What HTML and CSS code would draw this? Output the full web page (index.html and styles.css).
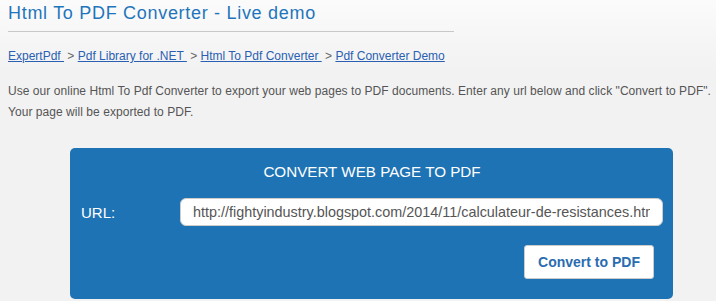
FILE: index.html
```html
<!DOCTYPE html>
<html lang="en">
<head>
  <meta charset="UTF-8">
  <title>Html To PDF Converter - Live demo</title>
  <link rel="stylesheet" href="styles.css">
</head>
<body>

<h1 class="page-title">Html To PDF Converter - Live demo</h1>

<!-- Breadcrumbs -->
<div class="crumbs">
  <a href="#">ExpertPdf </a>&nbsp;&gt; <a href="#">Pdf Library for .NET </a>&nbsp;&gt; <a href="#">Html To Pdf Converter </a>&nbsp;&gt; <a href="#">Pdf Converter Demo</a>
</div>

<p class="intro">Use our online Html To Pdf Converter to export your web pages to PDF documents. Enter any url below and click "Convert to PDF".<br>Your page will be exported to PDF.</p>

<!-- Converter box -->
<div class="converter">
  <div class="converter-title">CONVERT WEB PAGE TO PDF</div>
  <div class="url-row">
    <label for="url">URL:</label>
    <input type="text" id="url" value="http://fightyindustry.blogspot.com/2014/11/calculateur-de-resistances.html">
  </div>
  <div class="actions">
    <button type="button">Convert to PDF</button>
  </div>
</div>

</body>
</html>
```

FILE: styles.css
```css
body {
  margin: 0;
  padding: 0 8px;
  font-family: "Liberation Sans", Arial, sans-serif;
  background: linear-gradient(#fbfbfb, #f2f2f2 70px);
  background-color: #f2f2f2;
  min-height: 301px;
  box-sizing: border-box;
}
.page-title {
  width: 446px;
  margin: 0;
  padding: 2px 0 7px;
  font-size: 18px;
  font-weight: normal;
  letter-spacing: 0.7px;
  line-height: 22px;
  color: #1f75bb;
  border-bottom: 1px solid #c8c8c8;
}
.crumbs {
  margin-top: 16px;
  font-size: 12px;
  line-height: 16px;
  color: #666;
}
.crumbs a {
  color: #2a5fb2;
}
.intro {
  margin: 17px 0 0;
  font-size: 12px;
  letter-spacing: 0.05px;
  line-height: 21px;
  white-space: nowrap;
  color: #555;
}
.converter {
  width: 603px;
  margin: 25px 0 0 62px;
  padding: 14px 10px 20px 11px;
  box-sizing: border-box;
  background-color: #1e73b4;
  border-radius: 5px;
  color: #fff;
}
.converter-title {
  text-align: center;
  font-size: 15.2px;
  line-height: 20px;
}
.url-row {
  display: flex;
  align-items: center;
  margin-top: 16px;
}
.url-row label {
  width: 99px;
  font-size: 15px;
}
.url-row input {
  flex: 1;
  height: 28px;
  box-sizing: border-box;
  padding: 0 12px;
  border: 1px solid #ccc;
  border-radius: 6px;
  font-family: "Liberation Sans", Arial, sans-serif;
  font-size: 14.4px;
  color: #555;
  background: #fff;
}
.actions {
  display: flex;
  justify-content: flex-end;
  margin: 19px 9px 0 0;
}
.actions button {
  width: 130px;
  height: 34px;
  border: 1px solid #ccc;
  border-radius: 3px;
  background: #fff;
  font-family: "Liberation Sans", Arial, sans-serif;
  font-size: 14px;
  font-weight: bold;
  color: #2a6cb0;
  cursor: pointer;
}
```
